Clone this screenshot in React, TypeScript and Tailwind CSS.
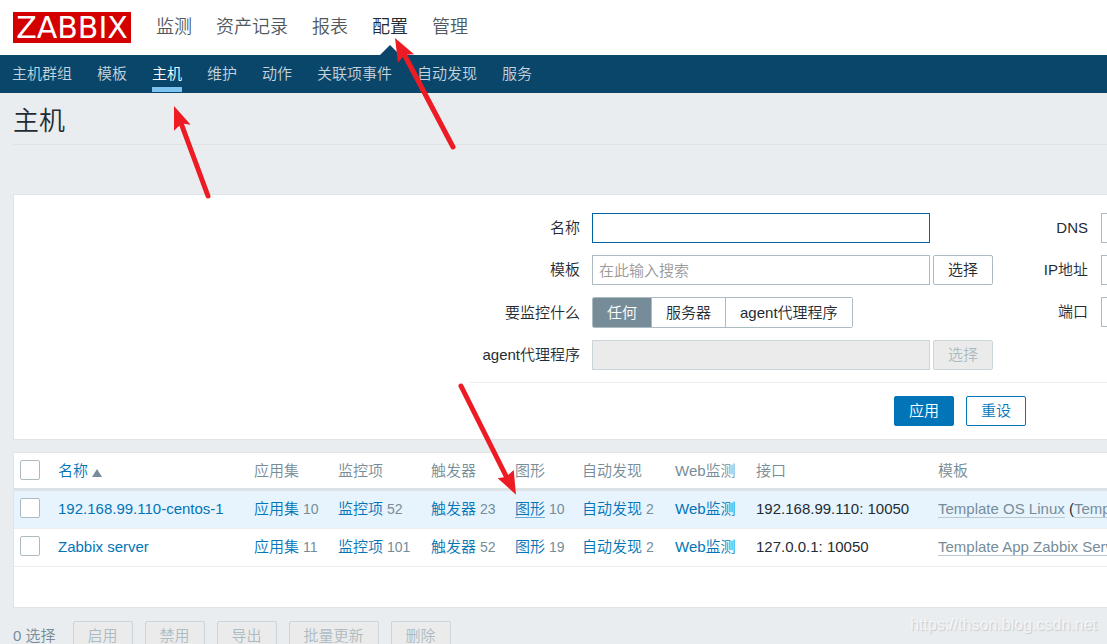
import { useState } from "react";
import type { ReactNode } from "react";
import { clsx } from "clsx";

const mainMenu = ["监测", "资产记录", "报表", "配置", "管理"];
const subMenu = ["主机群组", "模板", "主机", "维护", "动作", "关联项事件", "自动发现", "服务"];
const monitoredBy = ["任何", "服务器", "agent代理程序"];
const bulkActions = ["启用", "禁用", "导出", "批量更新", "删除"];

const hosts = [
  {
    name: "192.168.99.110-centos-1",
    apps: 10,
    items: 52,
    triggers: 23,
    graphs: 10,
    discovery: 2,
    iface: "192.168.99.110: 10050",
    template: "Template OS Linux",
    linked: ["Template App Zabbix Agent"],
    hovered: true,
  },
  {
    name: "Zabbix server",
    apps: 11,
    items: 101,
    triggers: 52,
    graphs: 19,
    discovery: 2,
    iface: "127.0.0.1: 10050",
    template: "Template App Zabbix Server",
    linked: [],
    hovered: false,
  },
];

function Header() {
  return (
    <header>
      <div className="flex h-[55px] items-center gap-[25px] bg-white pl-[13px]">
        <a
          href="#"
          className="h-[31px] w-[118px] shrink-0 bg-[#d40000] text-center font-['DejaVu_Sans',sans-serif] text-[30px] leading-[31px] font-normal text-white"
        >
          ZABBIX
        </a>
        <nav className="flex h-full gap-6 pb-px text-[18px] whitespace-nowrap">
          {mainMenu.map((label) => {
            const isActive = label === "配置";
            return (
              <a
                key={label}
                href="#"
                className={clsx("relative flex items-center", isActive ? "text-[#1f2c33]" : "text-[#50595e]")}
              >
                {label}
                {isActive && (
                  <svg className="absolute -bottom-px left-2" width="20" height="10" viewBox="0 0 20 10">
                    <path d="M0 10 L10 0 L20 10 Z" fill="#0a466a" />
                  </svg>
                )}
              </a>
            );
          })}
        </nav>
      </div>
      <nav className="flex h-[38px] gap-[25px] bg-[#0a466a] pl-3 whitespace-nowrap">
        {subMenu.map((label) => (
          <a
            key={label}
            href="#"
            className={clsx(
              "mb-px flex items-center border-b-5 pt-[5px]",
              label === "主机" ? "border-[#7cc3f0] text-white" : "border-transparent text-[#c5d3dc]"
            )}
          >
            {label}
          </a>
        ))}
      </nav>
    </header>
  );
}

function Button({ children, variant = "default" }: { children: ReactNode; variant?: "default" | "primary" | "outline" | "disabled" }) {
  return (
    <button
      type="button"
      disabled={variant === "disabled"}
      className={clsx(
        "h-[30px] shrink-0 rounded-xs border px-3.5 leading-5 whitespace-nowrap",
        variant === "default" && "border-[#acbbc2] bg-white text-[#1f2c33]",
        variant === "primary" && "border-[#0275b8] bg-[#0275b8] text-white",
        variant === "outline" && "border-[#0275b8] bg-white text-[#0275b8]",
        variant === "disabled" && "border-[#ccd5d9] bg-[#ebebeb] text-[#acbbc2]"
      )}
    >
      {children}
    </button>
  );
}

const inputClass = "h-[30px] w-[338px] shrink-0 border px-1.5 outline-none placeholder:text-[#9a9a9a]";

function Filter() {
  const [monitored, setMonitored] = useState("任何");

  return (
    <section className="overflow-hidden border-y border-l border-[#dfe4e7] bg-white pt-[18px] pb-[13px]">
      <form className="ml-[456px] w-[980px]">
        <div className="flex pb-3">
          <div className="flex w-[490px] shrink-0 flex-col gap-3">
            <div className="flex items-center gap-3">
              <label htmlFor="name" className="w-[110px] text-right">名称</label>
              <input id="name" className={clsx(inputClass, "border-[#0064a0] bg-white")} />
            </div>
            <div className="flex items-center gap-3">
              <label htmlFor="template" className="w-[110px] shrink-0 text-right">模板</label>
              <div className="flex gap-[3px]">
                <input id="template" placeholder="在此输入搜索" className={clsx(inputClass, "border-[#acbbc2] bg-white")} />
                <Button>选择</Button>
              </div>
            </div>
            <fieldset className="flex items-center gap-3">
              <span id="monitored" className="w-[110px] shrink-0 text-right">要监控什么</span>
              <div role="radiogroup" aria-labelledby="monitored" className="flex overflow-hidden rounded-xs border border-[#acbbc2]">
                {monitoredBy.map((label, i) => (
                  <label
                    key={label}
                    className={clsx(
                      "relative h-[29px] px-[14px] leading-[29px] whitespace-nowrap",
                      i > 0 && "border-l border-[#acbbc2]",
                      monitored === label ? "bg-[#768d99] text-white" : "bg-white"
                    )}
                  >
                    <input
                      type="radio"
                      name="monitored_by"
                      className="sr-only"
                      checked={monitored === label}
                      onChange={() => setMonitored(label)}
                    />
                    {label}
                  </label>
                ))}
              </div>
            </fieldset>
            <div className="flex items-center gap-3">
              <label htmlFor="proxy" className="w-[110px] shrink-0 text-right whitespace-nowrap">agent代理程序</label>
              <div className="flex gap-[3px]">
                <input id="proxy" disabled className={clsx(inputClass, "border-[#ccd5d9] bg-[#ebebeb]")} />
                <Button variant="disabled">选择</Button>
              </div>
            </div>
          </div>
          <div className="flex w-[490px] shrink-0 flex-col gap-3">
            {["DNS", "IP地址", "端口"].map((label) => (
              <div key={label} className="flex items-center gap-[13px]">
                <label htmlFor={label} className="w-[128px] shrink-0 text-right">{label}</label>
                <input id={label} className={clsx(inputClass, "border-[#acbbc2] bg-white")} />
              </div>
            ))}
          </div>
        </div>
        <div className="flex justify-center gap-3 border-t border-[#ebeef0] pt-[13px]">
          <Button variant="primary">应用</Button>
          <Button variant="outline">重设</Button>
        </div>
      </form>
    </section>
  );
}

function CountLink({ label, count, underlined }: { label: string; count?: number; underlined?: boolean }) {
  return (
    <>
      <a href="#" className={clsx("text-[#0275b8]", underlined && "border-b border-[#67acd5]")}>{label}</a>
      {count !== undefined && <span className="text-[14px] text-[#768d99]"> {count}</span>}
    </>
  );
}

function Checkbox({ label }: { label: string }) {
  return (
    <input
      type="checkbox"
      aria-label={label}
      className="block size-5 appearance-none rounded-xs border border-[#acbbc2] bg-white checked:bg-[#0275b8]"
    />
  );
}

function TemplateLink({ children }: { children: ReactNode }) {
  return <a href="#" className="border-b border-[#bcc8ce] text-[#768d99]">{children}</a>;
}

function HostTable() {
  return (
    <section className="overflow-hidden border-y border-l border-[#dfe4e7] bg-white pb-10">
      <table className="w-full table-fixed border-separate border-spacing-0 text-left whitespace-nowrap [&_td]:h-[38px] [&_td]:border-b [&_td]:border-[#ebeef0] [&_td]:px-1.5 [&_td]:pb-px [&_td:first-child]:pb-[3px] [&_th]:h-[38px] [&_th]:border-b-3 [&_th]:border-[#dce2e5] [&_th]:px-1.5 [&_th]:font-[350]">
        <colgroup>
          <col className="w-[38px]" />
          <col className="w-[196px]" />
          <col className="w-[84px]" />
          <col className="w-[93px]" />
          <col className="w-[84px]" />
          <col className="w-[67px]" />
          <col className="w-[93px]" />
          <col className="w-[81px]" />
          <col className="w-[182px]" />
          <col />
        </colgroup>
        <thead className="text-[#768d99]">
          <tr>
            <th className="pb-0.5"><Checkbox label="全选" /></th>
            <th>
              <a href="#" className="text-[#0275b8]">
                名称
                <svg className="ml-1 inline-block align-[-1px]" width="10" height="8" viewBox="0 0 10 8">
                  <path d="M0 8 L5 0 L10 8 Z" fill="#768d99" />
                </svg>
              </a>
            </th>
            <th>应用集</th>
            <th>监控项</th>
            <th>触发器</th>
            <th>图形</th>
            <th>自动发现</th>
            <th>Web监测</th>
            <th>接口</th>
            <th>模板</th>
          </tr>
        </thead>
        <tbody>
          {hosts.map((host) => (
            <tr key={host.name} className={clsx(host.hovered && "bg-[#e7f4fe]")}>
              <td><Checkbox label={host.name} /></td>
              <td><a href="#" className="text-[#0275b8]">{host.name}</a></td>
              <td><CountLink label="应用集" count={host.apps} /></td>
              <td><CountLink label="监控项" count={host.items} /></td>
              <td><CountLink label="触发器" count={host.triggers} /></td>
              <td><CountLink label="图形" count={host.graphs} underlined={host.hovered} /></td>
              <td><CountLink label="自动发现" count={host.discovery} /></td>
              <td><CountLink label="Web监测" /></td>
              <td>{host.iface}</td>
              <td>
                <TemplateLink>{host.template}</TemplateLink>
                {host.linked.map((name) => (
                  <span key={name}> (<TemplateLink>{name}</TemplateLink>)</span>
                ))}
              </td>
            </tr>
          ))}
        </tbody>
      </table>
    </section>
  );
}

// Red pointers drawn over the page
function Arrows() {
  return (
    <svg className="pointer-events-none absolute top-0 left-0" width="560" height="520" viewBox="0 0 560 520">
      <g stroke="#ed1c24" strokeWidth="5" strokeLinecap="round">
        <path d="M404 54 L453 147" />
        <path d="M181 123 L208 196" />
        <path d="M461 386 L507 478" />
      </g>
      <g fill="#ed1c24">
        <path d="M395 38 L414 54.3 L407.3 54.8 L402.3 57.5 L398 62.7 Z" />
        <path d="M174 106 L190.7 124.7 L184 123.7 L179.3 125.7 L174 130.7 Z" />
        <path d="M516 494.7 L497.7 478.3 L503.7 477.3 L508.7 474.5 L513.7 470 Z" />
      </g>
    </svg>
  );
}

export default function App() {
  return (
    <div className="relative min-h-screen overflow-hidden bg-[#e9edf0] font-['Liberation_Sans','Noto_Sans_CJK_SC',sans-serif] text-[15px] leading-5 font-[350] text-[#1f2c33]">
      <Header />
      <main className="pl-[13px]">
        <h1 className="flex h-[52px] items-center border-b border-[#dfe4e7] pt-1 text-[26px] leading-8 font-[350]">主机</h1>
        <div className="flex flex-col gap-3 pt-[49px]">
          <Filter />
          <HostTable />
        </div>
        <div className="flex items-center gap-3 py-[13px]">
          <span className="mr-[5px] whitespace-nowrap text-[#768d99]">0 选择</span>
          {bulkActions.map((label) => (
            <Button key={label} variant="disabled">{label}</Button>
          ))}
        </div>
      </main>
      <Arrows />
      <div className="absolute top-[615px] right-2.5 text-[16px] text-white/70 [text-shadow:1px_1px_1px_#c6cbce]">
        https://thson.blog.csdn.net
      </div>
    </div>
  );
}
